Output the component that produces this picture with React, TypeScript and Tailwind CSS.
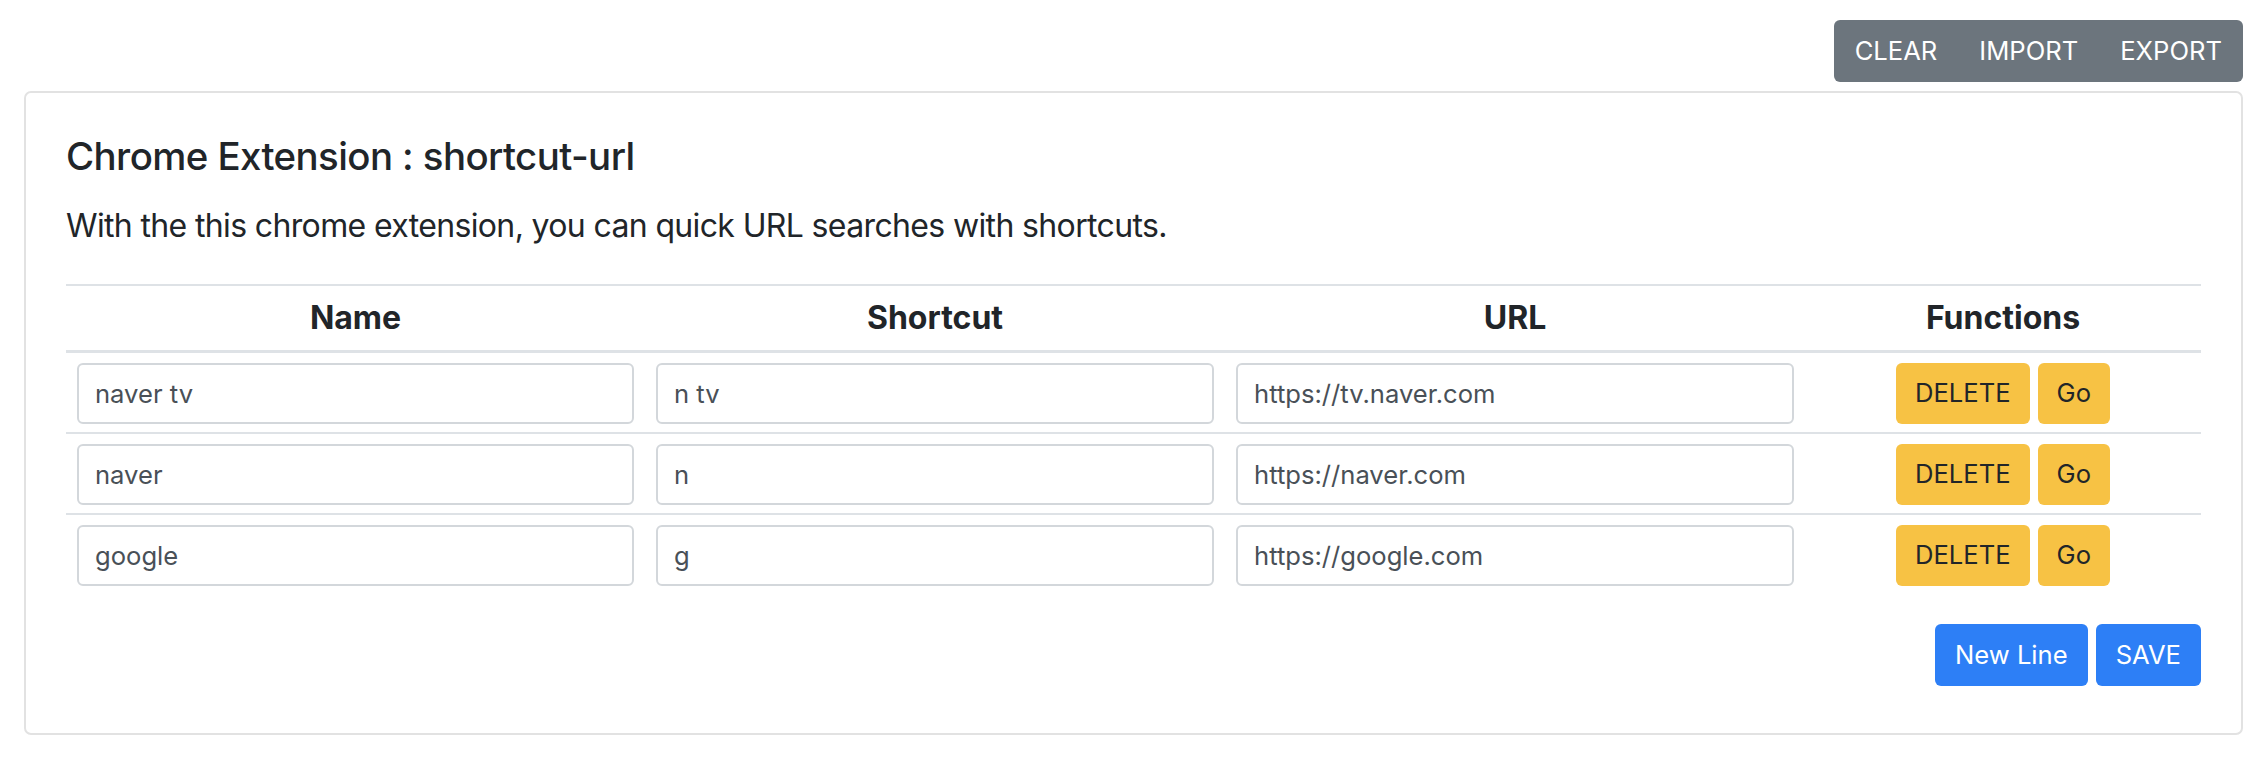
import type { FC } from "react";

type Shortcut = { name: string; key: string; url: string };

const rows: Shortcut[] = [
  { name: "naver tv", key: "n tv", url: "https://tv.naver.com" },
  { name: "naver", key: "n", url: "https://naver.com" },
  { name: "google", key: "g", url: "https://google.com" },
];

const cols = "grid grid-cols-[579px_580px_580px_1fr]";

const Field: FC<{ value: string }> = ({ value }) => (
  <input
    readOnly
    value={value}
    className="h-[61px] w-full rounded-[6px] border-2 border-[#d3d7db] bg-white px-[16px] text-[25.6px] text-[#495057] outline-none"
  />
);

const App: FC = () => {
  return (
    <div className="min-h-screen bg-white pt-[20px] pr-[21px] pl-[24px] font-['Inter','Noto_Sans',sans-serif] text-[#212529]">
      {/* верхние кнопки */}
      <div className="flex justify-end">
        <div className="flex overflow-hidden rounded-[6px] bg-[#6c757d] text-[25.6px] text-white">
          <button className="h-[62px] px-[21px]">CLEAR</button>
          <button className="h-[62px] px-[21px]">IMPORT</button>
          <button className="h-[62px] px-[21px]">EXPORT</button>
        </div>
      </div>

      <div className="mt-[9px] rounded-[7px] border-2 border-[#e2e2e2] p-[40px]">
        <h4 className="mb-[23px] text-[38.4px] leading-[46px] font-medium tracking-[-0.015em]">
          Chrome Extension : shortcut-url
        </h4>
        <p className="mb-[34px] text-[32px] leading-[48px] tracking-[-0.02em]">
          With the this chrome extension, you can quick URL searches with shortcuts.
        </p>

        {/* таблица */}
        <div className="border-t-2 border-[#dee2e6]">
          <div className={`${cols} h-[65px] items-center border-b border-[#dee2e6] text-center text-[32px] font-bold`}>
            <div>Name</div>
            <div>Shortcut</div>
            <div>URL</div>
            <div>Functions</div>
          </div>
          {rows.map((r) => (
            <div key={r.name} className={`${cols} border-t-2 border-[#dee2e6] pt-[10px] pb-[8px]`}>
              <div className="px-[11px]">
                <Field value={r.name} />
              </div>
              <div className="px-[11px]">
                <Field value={r.key} />
              </div>
              <div className="px-[11px]">
                <Field value={r.url} />
              </div>
              <div className="flex justify-center gap-[8px] px-[11px]">
                <button className="h-[61px] rounded-[6px] bg-[#f7c244] px-[19px] text-[25.6px]">DELETE</button>
                <button className="h-[61px] rounded-[6px] bg-[#f7c244] px-[19px] text-[25.6px]">Go</button>
              </div>
            </div>
          ))}
        </div>

        <div className="mt-[30px] mb-[7px] flex justify-end gap-[8px]">
          <button className="h-[62px] rounded-[6px] bg-[#2d7ff6] px-[20px] text-[25.6px] text-white">New Line</button>
          <button className="h-[62px] rounded-[6px] bg-[#2d7ff6] px-[20px] text-[25.6px] text-white">SAVE</button>
        </div>
      </div>
    </div>
  );
};

export default App;
